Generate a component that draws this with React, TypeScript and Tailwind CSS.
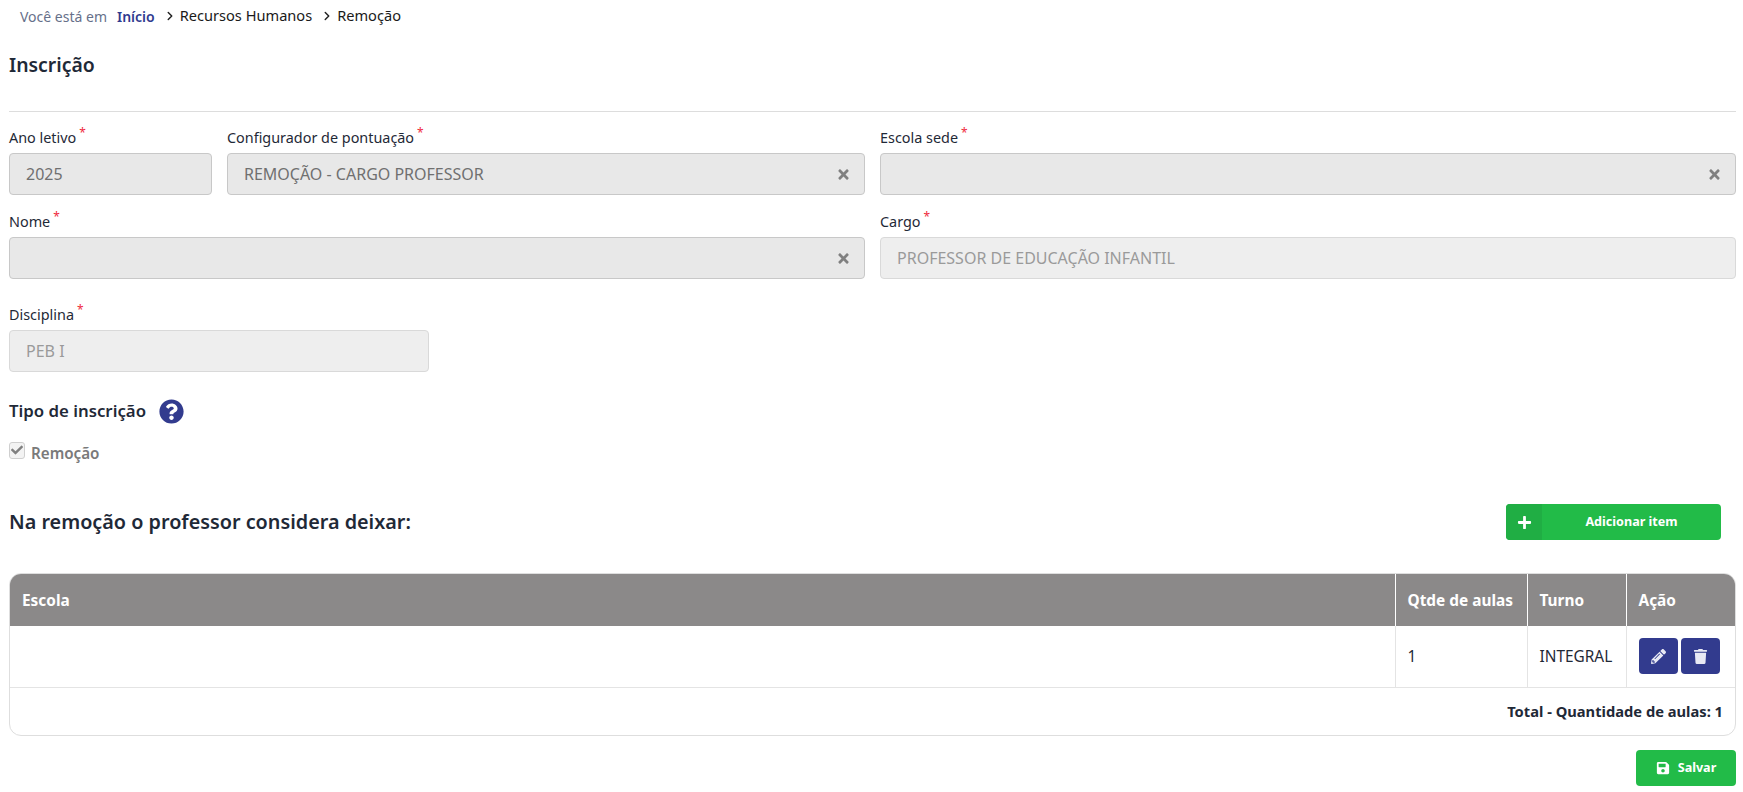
import { FaCheck, FaPencilAlt, FaPlus, FaQuestionCircle, FaSave, FaTimes, FaTrash } from "react-icons/fa";
import { LuChevronRight } from "react-icons/lu";

function Label({ children }: { children: string }) {
  return (
    <label className="flex h-[22px] items-center text-[14.4px] text-[#1f2937]">
      {children}
      <span className="relative top-[-5px] ml-[3px] text-[12px] leading-none text-[#ef2b3d]">*</span>
    </label>
  );
}

function Field({ label, value, clear, light, className }: { label: string; value?: string; clear?: boolean; light?: boolean; className?: string }) {
  return (
    <div className={className}>
      <Label>{label}</Label>
      <div
        className={
          "mt-[4px] flex h-[42px] items-center justify-between rounded-[4px] border pl-[16px] pr-[13px] text-[16px] " +
          (light ? "border-[#d9d9d9] bg-[#eeeeee] text-[#9a9a9a]" : "border-[#c8c8c8] bg-[#e8e8e8] text-[#707070]")
        }
      >
        <span>{value}</span>
        {clear && <FaTimes className="text-[15px] text-[#808080]" />}
      </div>
    </div>
  );
}

export default function App() {
  return (
    <div className="min-h-[792px] bg-white pl-[9px] pr-[7px] font-['Noto_Sans',sans-serif] text-[#1f2937]">
      <div className="flex h-[32px] items-center pl-[11px] text-[14px]">
        <span className="text-[#66708a]">Você está em</span>
        <span className="ml-[10px] font-semibold text-[#2f3a8f]">Início</span>
        <LuChevronRight className="ml-[8px] text-[14px] text-[#222]" strokeWidth={2.5} />
        <span className="ml-[3px] text-[14.6px] text-[#1a1a1a]">Recursos Humanos</span>
        <LuChevronRight className="ml-[8px] text-[14px] text-[#222]" strokeWidth={2.5} />
        <span className="ml-[3px] text-[14.6px] text-[#1a1a1a]">Remoção</span>
      </div>

      <h1 className="mt-[18px] text-[19.4px] font-semibold leading-[30px]">Inscrição</h1>
      <hr className="mt-[31px] border-[#dddddd]" />

      <div className="mt-[15px] flex gap-[15px]">
        <Field label="Ano letivo" value="2025" className="w-[203px]" />
        <Field label="Configurador de pontuação" value="REMOÇÃO - CARGO PROFESSOR" clear className="w-[638px]" />
        <Field label="Escola sede" clear className="flex-1" />
      </div>
      <div className="mt-[16px] flex gap-[15px]">
        <Field label="Nome" clear className="w-[856px]" />
        <Field label="Cargo" value="PROFESSOR DE EDUCAÇÃO INFANTIL" light className="flex-1" />
      </div>
      <Field label="Disciplina" value="PEB I" light className="mt-[25px] w-[420px]" />

      <div className="mt-[26px] flex h-[26px] items-center gap-[13px]">
        <span className="text-[16.8px] font-semibold">Tipo de inscrição</span>
        <FaQuestionCircle className="text-[25px] text-[#323b8e]" />
      </div>

      <div className="mt-[18px] flex h-[20px] items-start gap-[6px]">
        <span className="flex h-[17px] w-[16px] items-start justify-center rounded-[3px] border border-[#cfcfcf] bg-[#f3f3f3] pt-[1px]">
          <FaCheck className="text-[12px] text-[#808080]" />
        </span>
        <span className="text-[15.2px] font-semibold leading-[22px] text-[#7a7a7a]">Remoção</span>
      </div>

      <div className="mt-[42px] flex h-[36px] items-center justify-between pr-[15px]">
        <h2 className="text-[19.8px] font-semibold">Na remoção o professor considera deixar:</h2>
        <button className="flex h-[36px] w-[215px] overflow-hidden rounded-[4px] bg-[#22bb48] text-[12.6px] font-bold text-white">
          <span className="flex h-full w-[36px] items-center justify-center bg-[#20ae44]">
            <FaPlus className="text-[15px]" />
          </span>
          <span className="flex flex-1 items-center justify-center">Adicionar item</span>
        </button>
      </div>

      <div className="mt-[33px] overflow-hidden rounded-[12px] border border-[#dedede]">
        <table className="w-full table-fixed border-collapse text-[15.4px]">
          <colgroup>
            <col />
            <col className="w-[132px]" />
            <col className="w-[99px]" />
            <col className="w-[109px]" />
          </colgroup>
          <thead>
            <tr className="h-[52px] bg-[#8b8989] text-left font-bold text-white">
              <th className="px-[12px] pt-[2px]">Escola</th>
              <th className="border-l border-white px-[12px] pt-[2px] whitespace-nowrap">Qtde de aulas</th>
              <th className="border-l border-white px-[12px] pt-[2px]">Turno</th>
              <th className="border-l border-white px-[12px] pt-[2px]">Ação</th>
            </tr>
          </thead>
          <tbody>
            <tr className="h-[61px] border-b border-[#e4e4e4]">
              <td />
              <td className="border-l border-[#e4e4e4] px-[12px] pt-[1px]">1</td>
              <td className="border-l border-[#e4e4e4] px-[12px] pt-[1px]">INTEGRAL</td>
              <td className="border-l border-[#e4e4e4] px-[12px]">
                <div className="flex gap-[3px]">
                  <button className="flex h-[36px] w-[39px] items-center justify-center rounded-[4px] bg-[#323b8e] text-[#e8e9f4]">
                    <FaPencilAlt className="text-[15px]" />
                  </button>
                  <button className="flex h-[36px] w-[39px] items-center justify-center rounded-[4px] bg-[#323b8e] text-[#e8e9f4]">
                    <FaTrash className="text-[15px]" />
                  </button>
                </div>
              </td>
            </tr>
            <tr className="h-[48px]">
              <td colSpan={4} className="px-[12px] text-right text-[14.7px] font-bold">Total - Quantidade de aulas: 1</td>
            </tr>
          </tbody>
        </table>
      </div>

      <div className="mt-[14px] flex justify-end">
        <button className="flex h-[36px] w-[100px] items-center justify-center gap-[8px] rounded-[4px] bg-[#22bb48] text-[12.6px] font-bold text-white">
          <FaSave className="text-[14px]" />
          Salvar
        </button>
      </div>
    </div>
  );
}
